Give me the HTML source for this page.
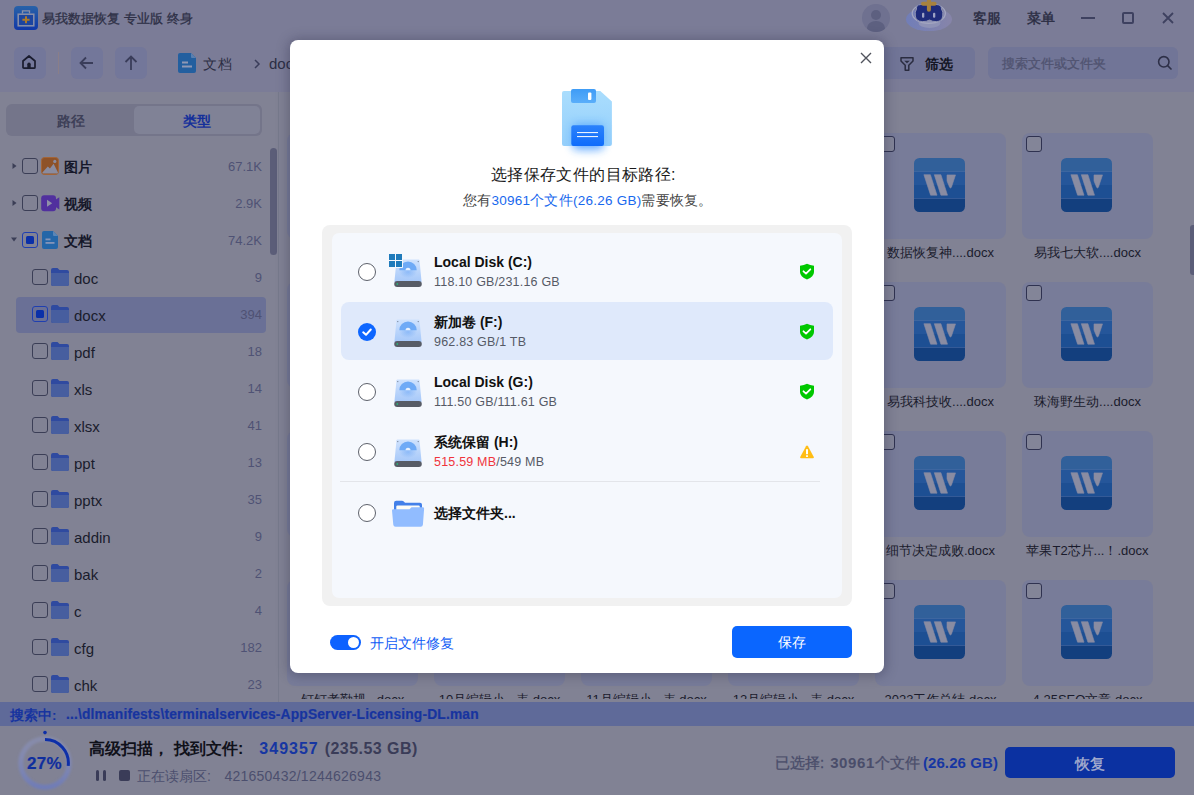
<!DOCTYPE html>
<html><head><meta charset="utf-8">
<style>
*{box-sizing:border-box;margin:0;padding:0}
html,body{width:1194px;height:795px;overflow:hidden;font-family:"Liberation Sans",sans-serif;background:#818294;position:relative}
.a{position:absolute}
.t{position:absolute;white-space:nowrap;line-height:1}
/* header */
#hdr{left:0;top:0;width:1194px;height:92px;background:#7b7c97}
.tbtn{position:absolute;top:47px;width:32px;height:32px;border-radius:6px;background:#73779a}
/* sidebar */
#side{left:0;top:92px;width:279px;height:610px;background:#818294;border-right:1px solid #777a8c}
.cb{position:absolute;width:16px;height:16px;border:1.3px solid #3b3e56;border-radius:3px}
.cbp{border-color:#1f3fb0}
.cbp::after{content:"";position:absolute;left:2.7px;top:2.7px;width:8px;height:8px;background:#0b30a8;border-radius:1.5px}
.tx0{font-size:14px;font-weight:bold;color:#16182a}
.tx1{font-size:15px;color:#1a1c2c}
.cnt{font-size:13px;color:#4f5274;text-align:right;width:60px}
/* cards */
.card{position:absolute;width:131px;height:106px;border-radius:8px;background:#787c99}
.card .cb{left:4px;top:3px;width:16px;height:16px;border-color:#2f3250;background:#838598}
.lbl{position:absolute;width:147px;text-align:center;font-size:13px;color:#1a1b2c;white-space:nowrap;margin-top:1px}
</style></head><body>
<div id="hdr" class="a"></div>
<div id="side" class="a"></div>

<!-- sidebar -->
<div class="a" style="left:6px;top:104px;width:256px;height:32px;border-radius:6px;background:#74758a"></div>
<div class="a" style="left:134px;top:106px;width:126px;height:28px;border-radius:5px;background:#808296"></div>
<div class="t" style="left:57px;top:114px;font-size:14px;color:#3e4058;font-weight:bold">路径</div>
<div class="t" style="left:183px;top:114px;font-size:14px;color:#15309a;font-weight:bold">类型</div>
<div class="a" style="left:270px;top:148px;width:7px;height:107px;border-radius:3.5px;background:#5b5d78"></div>
<div class="a" style="left:16px;top:297px;width:250px;height:36px;border-radius:4px;background:#6a7096"></div>
<svg class="a" style="left:12px;top:162px" width="6" height="8" viewBox="0 0 6 8"><path d="M0.5 1 V7 L4.5 4Z" fill="#3b3e56"/></svg><div class="cb" style="left:22px;top:158px"></div><svg class="a" style="left:41px;top:157px" width="18" height="18" viewBox="0 0 18 18"><rect x="0.5" y="0.5" width="17" height="17" rx="3" fill="#8e5228" stroke="#a36436" stroke-width="1"/><path d="M1.4 15.6 L6.8 9.6 L8.9 11.4 L12.6 6.8 L17 15.6 Q17 16.6 16 16.6 H2.4 Q1.4 16.6 1.4 15.6Z" fill="#8a8ca0"/><circle cx="13.8" cy="4.4" r="1.6" fill="#8a8ca0"/></svg><div class="t tx0" style="left:64px;top:160px">图片</div><div class="t cnt" style="left:202px;top:160px">67.1K</div><svg class="a" style="left:12px;top:199px" width="6" height="8" viewBox="0 0 6 8"><path d="M0.5 1 V7 L4.5 4Z" fill="#3b3e56"/></svg><div class="cb" style="left:22px;top:195px"></div><svg class="a" style="left:41px;top:194px" width="19" height="18" viewBox="0 0 19 18"><rect x="0.2" y="1.3" width="14.8" height="16" rx="3" fill="#51309e"/><path d="M14 6 L18.3 3.2 V15.4 L14 12.6Z" fill="#51309e"/><path d="M6 5.8 L11.2 9.3 L6 12.8Z" fill="#8f90a8"/></svg><div class="t tx0" style="left:64px;top:197px">视频</div><div class="t cnt" style="left:202px;top:197px">2.9K</div><svg class="a" style="left:10px;top:237px" width="8" height="6" viewBox="0 0 8 6"><path d="M1 0.5 H7 L4 4.5Z" fill="#3b3e56"/></svg><div class="cb cbp" style="left:22px;top:232px"></div><svg class="a" style="left:42px;top:231px" width="16" height="18" viewBox="0 0 16 18"><path d="M2 0 H11 L16 5 V16 Q16 18 14 18 H2 Q0 18 0 16 V2 Q0 0 2 0Z" fill="#2466a8"/><path d="M11 0 L16 5 H12 Q11 5 11 4Z" fill="#5a86b8"/><rect x="3.5" y="7.5" width="5" height="1.8" fill="#8494b8"/><rect x="3.5" y="11" width="9" height="1.8" fill="#8494b8"/></svg><div class="t tx0" style="left:64px;top:234px">文档</div><div class="t cnt" style="left:202px;top:234px">74.2K</div><div class="cb" style="left:32px;top:269px"></div><svg class="a" style="left:51px;top:268px" width="18" height="18" viewBox="0 0 18 18"><path d="M0 2 Q0 0 2 0 H6.5 L8.5 2 H16 Q18 2 18 4 V16 Q18 18 16 18 H2 Q0 18 0 16Z" fill="#2f4aa0"/><path d="M0 5 H18 V16 Q18 18 16 18 H2 Q0 18 0 16Z" fill="#475e9f"/></svg><div class="t tx1" style="left:74px;top:271px">doc</div><div class="t cnt" style="left:202px;top:271px">9</div><div class="cb cbp" style="left:32px;top:306px"></div><svg class="a" style="left:51px;top:305px" width="18" height="18" viewBox="0 0 18 18"><path d="M0 2 Q0 0 2 0 H6.5 L8.5 2 H16 Q18 2 18 4 V16 Q18 18 16 18 H2 Q0 18 0 16Z" fill="#2f4aa0"/><path d="M0 5 H18 V16 Q18 18 16 18 H2 Q0 18 0 16Z" fill="#475e9f"/></svg><div class="t tx1" style="left:74px;top:308px">docx</div><div class="t cnt" style="left:202px;top:308px">394</div><div class="cb" style="left:32px;top:343px"></div><svg class="a" style="left:51px;top:342px" width="18" height="18" viewBox="0 0 18 18"><path d="M0 2 Q0 0 2 0 H6.5 L8.5 2 H16 Q18 2 18 4 V16 Q18 18 16 18 H2 Q0 18 0 16Z" fill="#2f4aa0"/><path d="M0 5 H18 V16 Q18 18 16 18 H2 Q0 18 0 16Z" fill="#475e9f"/></svg><div class="t tx1" style="left:74px;top:345px">pdf</div><div class="t cnt" style="left:202px;top:345px">18</div><div class="cb" style="left:32px;top:380px"></div><svg class="a" style="left:51px;top:379px" width="18" height="18" viewBox="0 0 18 18"><path d="M0 2 Q0 0 2 0 H6.5 L8.5 2 H16 Q18 2 18 4 V16 Q18 18 16 18 H2 Q0 18 0 16Z" fill="#2f4aa0"/><path d="M0 5 H18 V16 Q18 18 16 18 H2 Q0 18 0 16Z" fill="#475e9f"/></svg><div class="t tx1" style="left:74px;top:382px">xls</div><div class="t cnt" style="left:202px;top:382px">14</div><div class="cb" style="left:32px;top:417px"></div><svg class="a" style="left:51px;top:416px" width="18" height="18" viewBox="0 0 18 18"><path d="M0 2 Q0 0 2 0 H6.5 L8.5 2 H16 Q18 2 18 4 V16 Q18 18 16 18 H2 Q0 18 0 16Z" fill="#2f4aa0"/><path d="M0 5 H18 V16 Q18 18 16 18 H2 Q0 18 0 16Z" fill="#475e9f"/></svg><div class="t tx1" style="left:74px;top:419px">xlsx</div><div class="t cnt" style="left:202px;top:419px">41</div><div class="cb" style="left:32px;top:454px"></div><svg class="a" style="left:51px;top:453px" width="18" height="18" viewBox="0 0 18 18"><path d="M0 2 Q0 0 2 0 H6.5 L8.5 2 H16 Q18 2 18 4 V16 Q18 18 16 18 H2 Q0 18 0 16Z" fill="#2f4aa0"/><path d="M0 5 H18 V16 Q18 18 16 18 H2 Q0 18 0 16Z" fill="#475e9f"/></svg><div class="t tx1" style="left:74px;top:456px">ppt</div><div class="t cnt" style="left:202px;top:456px">13</div><div class="cb" style="left:32px;top:491px"></div><svg class="a" style="left:51px;top:490px" width="18" height="18" viewBox="0 0 18 18"><path d="M0 2 Q0 0 2 0 H6.5 L8.5 2 H16 Q18 2 18 4 V16 Q18 18 16 18 H2 Q0 18 0 16Z" fill="#2f4aa0"/><path d="M0 5 H18 V16 Q18 18 16 18 H2 Q0 18 0 16Z" fill="#475e9f"/></svg><div class="t tx1" style="left:74px;top:493px">pptx</div><div class="t cnt" style="left:202px;top:493px">35</div><div class="cb" style="left:32px;top:528px"></div><svg class="a" style="left:51px;top:527px" width="18" height="18" viewBox="0 0 18 18"><path d="M0 2 Q0 0 2 0 H6.5 L8.5 2 H16 Q18 2 18 4 V16 Q18 18 16 18 H2 Q0 18 0 16Z" fill="#2f4aa0"/><path d="M0 5 H18 V16 Q18 18 16 18 H2 Q0 18 0 16Z" fill="#475e9f"/></svg><div class="t tx1" style="left:74px;top:530px">addin</div><div class="t cnt" style="left:202px;top:530px">9</div><div class="cb" style="left:32px;top:565px"></div><svg class="a" style="left:51px;top:564px" width="18" height="18" viewBox="0 0 18 18"><path d="M0 2 Q0 0 2 0 H6.5 L8.5 2 H16 Q18 2 18 4 V16 Q18 18 16 18 H2 Q0 18 0 16Z" fill="#2f4aa0"/><path d="M0 5 H18 V16 Q18 18 16 18 H2 Q0 18 0 16Z" fill="#475e9f"/></svg><div class="t tx1" style="left:74px;top:567px">bak</div><div class="t cnt" style="left:202px;top:567px">2</div><div class="cb" style="left:32px;top:602px"></div><svg class="a" style="left:51px;top:601px" width="18" height="18" viewBox="0 0 18 18"><path d="M0 2 Q0 0 2 0 H6.5 L8.5 2 H16 Q18 2 18 4 V16 Q18 18 16 18 H2 Q0 18 0 16Z" fill="#2f4aa0"/><path d="M0 5 H18 V16 Q18 18 16 18 H2 Q0 18 0 16Z" fill="#475e9f"/></svg><div class="t tx1" style="left:74px;top:604px">c</div><div class="t cnt" style="left:202px;top:604px">4</div><div class="cb" style="left:32px;top:639px"></div><svg class="a" style="left:51px;top:638px" width="18" height="18" viewBox="0 0 18 18"><path d="M0 2 Q0 0 2 0 H6.5 L8.5 2 H16 Q18 2 18 4 V16 Q18 18 16 18 H2 Q0 18 0 16Z" fill="#2f4aa0"/><path d="M0 5 H18 V16 Q18 18 16 18 H2 Q0 18 0 16Z" fill="#475e9f"/></svg><div class="t tx1" style="left:74px;top:641px">cfg</div><div class="t cnt" style="left:202px;top:641px">182</div><div class="cb" style="left:32px;top:676px"></div><svg class="a" style="left:51px;top:675px" width="18" height="18" viewBox="0 0 18 18"><path d="M0 2 Q0 0 2 0 H6.5 L8.5 2 H16 Q18 2 18 4 V16 Q18 18 16 18 H2 Q0 18 0 16Z" fill="#2f4aa0"/><path d="M0 5 H18 V16 Q18 18 16 18 H2 Q0 18 0 16Z" fill="#475e9f"/></svg><div class="t tx1" style="left:74px;top:678px">chk</div><div class="t cnt" style="left:202px;top:678px">23</div>
<!-- grid -->
<svg width="0" height="0" style="position:absolute"><defs>
<symbol id="wd" viewBox="0 0 51 54">
 <clipPath id="wclip"><rect width="51" height="54" rx="5.5"/></clipPath>
 <g clip-path="url(#wclip)">
 <rect y="0" width="51" height="13.5" fill="#31609a"/>
 <rect y="13.5" width="51" height="13.5" fill="#25569a"/>
 <rect y="27" width="51" height="13.5" fill="#1d4f93"/>
 <rect y="40.5" width="51" height="13.5" fill="#133f7e"/>
 <rect y="13.3" width="51" height="0.6" fill="#3f6aa4"/>
 <rect y="40.3" width="51" height="0.6" fill="#3a62a0"/>
 </g>
 <g fill="#898ca2" stroke="#898ca2" stroke-width="0.6" stroke-linejoin="round">
 <path d="M9.9 16.7 H16.4 L23 37.2 H16.6Z"/>
 <path d="M20.3 16.7 H26.9 L33.5 37.2 H26.9Z"/>
 <path d="M33 16.9 H41.5 L37.4 29.3 Q36.4 30.6 35.6 29.3 L33 22.9Z"/>
 </g>
</symbol></defs></svg>
<div class="card" style="left:287px;top:133px"><div class="cb"></div></div><svg class="a" style="left:326px;top:158px" width="51" height="54"><use href="#wd"/></svg><div class="card" style="left:434px;top:133px"><div class="cb"></div></div><svg class="a" style="left:473px;top:158px" width="51" height="54"><use href="#wd"/></svg><div class="card" style="left:581px;top:133px"><div class="cb"></div></div><svg class="a" style="left:620px;top:158px" width="51" height="54"><use href="#wd"/></svg><div class="card" style="left:728px;top:133px"><div class="cb"></div></div><svg class="a" style="left:767px;top:158px" width="51" height="54"><use href="#wd"/></svg><div class="card" style="left:875px;top:133px"><div class="cb"></div></div><svg class="a" style="left:914px;top:158px" width="51" height="54"><use href="#wd"/></svg><div class="t lbl" style="left:867px;top:245px">数据恢复神....docx</div><div class="card" style="left:1022px;top:133px"><div class="cb"></div></div><svg class="a" style="left:1061px;top:158px" width="51" height="54"><use href="#wd"/></svg><div class="t lbl" style="left:1014px;top:245px">易我七大软....docx</div><div class="card" style="left:287px;top:282px"><div class="cb"></div></div><svg class="a" style="left:326px;top:307px" width="51" height="54"><use href="#wd"/></svg><div class="card" style="left:434px;top:282px"><div class="cb"></div></div><svg class="a" style="left:473px;top:307px" width="51" height="54"><use href="#wd"/></svg><div class="card" style="left:581px;top:282px"><div class="cb"></div></div><svg class="a" style="left:620px;top:307px" width="51" height="54"><use href="#wd"/></svg><div class="card" style="left:728px;top:282px"><div class="cb"></div></div><svg class="a" style="left:767px;top:307px" width="51" height="54"><use href="#wd"/></svg><div class="card" style="left:875px;top:282px"><div class="cb"></div></div><svg class="a" style="left:914px;top:307px" width="51" height="54"><use href="#wd"/></svg><div class="t lbl" style="left:867px;top:394px">易我科技收....docx</div><div class="card" style="left:1022px;top:282px"><div class="cb"></div></div><svg class="a" style="left:1061px;top:307px" width="51" height="54"><use href="#wd"/></svg><div class="t lbl" style="left:1014px;top:394px">珠海野生动....docx</div><div class="card" style="left:287px;top:431px"><div class="cb"></div></div><svg class="a" style="left:326px;top:456px" width="51" height="54"><use href="#wd"/></svg><div class="card" style="left:434px;top:431px"><div class="cb"></div></div><svg class="a" style="left:473px;top:456px" width="51" height="54"><use href="#wd"/></svg><div class="card" style="left:581px;top:431px"><div class="cb"></div></div><svg class="a" style="left:620px;top:456px" width="51" height="54"><use href="#wd"/></svg><div class="card" style="left:728px;top:431px"><div class="cb"></div></div><svg class="a" style="left:767px;top:456px" width="51" height="54"><use href="#wd"/></svg><div class="card" style="left:875px;top:431px"><div class="cb"></div></div><svg class="a" style="left:914px;top:456px" width="51" height="54"><use href="#wd"/></svg><div class="t lbl" style="left:867px;top:543px">细节决定成败.docx</div><div class="card" style="left:1022px;top:431px"><div class="cb"></div></div><svg class="a" style="left:1061px;top:456px" width="51" height="54"><use href="#wd"/></svg><div class="t lbl" style="left:1014px;top:543px">苹果T2芯片...！.docx</div><div class="card" style="left:287px;top:580px"><div class="cb"></div></div><svg class="a" style="left:326px;top:605px" width="51" height="54"><use href="#wd"/></svg><div class="t lbl" style="left:279px;top:692px">钉钉考勤规...docx</div><div class="card" style="left:434px;top:580px"><div class="cb"></div></div><svg class="a" style="left:473px;top:605px" width="51" height="54"><use href="#wd"/></svg><div class="t lbl" style="left:426px;top:692px">10月编辑小...表.docx</div><div class="card" style="left:581px;top:580px"><div class="cb"></div></div><svg class="a" style="left:620px;top:605px" width="51" height="54"><use href="#wd"/></svg><div class="t lbl" style="left:573px;top:692px">11月编辑小...表.docx</div><div class="card" style="left:728px;top:580px"><div class="cb"></div></div><svg class="a" style="left:767px;top:605px" width="51" height="54"><use href="#wd"/></svg><div class="t lbl" style="left:720px;top:692px">12月编辑小...表.docx</div><div class="card" style="left:875px;top:580px"><div class="cb"></div></div><svg class="a" style="left:914px;top:605px" width="51" height="54"><use href="#wd"/></svg><div class="t lbl" style="left:867px;top:692px">2023工作总结.docx</div><div class="card" style="left:1022px;top:580px"><div class="cb"></div></div><svg class="a" style="left:1061px;top:605px" width="51" height="54"><use href="#wd"/></svg><div class="t lbl" style="left:1014px;top:692px">4.25SEO文章.docx</div><div class="a" style="left:1190px;top:225px;width:6px;height:50px;border-radius:3px;background:#5b5d78"></div><!-- title bar -->
<svg class="a" style="left:14px;top:6px" width="24" height="24" viewBox="0 0 24 24">
 <defs><linearGradient id="gi" x1="0" y1="0" x2="0" y2="1"><stop offset="0" stop-color="#2862a8"/><stop offset="1" stop-color="#1038a8"/></linearGradient></defs>
 <rect x="0" y="0" width="24" height="24" rx="4" fill="url(#gi)"/>
 <path d="M8.5 7.6 V4.8 H15.5 V7.6" fill="none" stroke="#8a90a8" stroke-width="1.3"/>
 <rect x="4.2" y="8.2" width="15.6" height="11.6" fill="#1c45a0" stroke="#8a90a8" stroke-width="1.5"/>
 <path d="M12 10.3 V17.2 M8.4 13.7 H15.6" stroke="#ad7a2a" stroke-width="2"/>
</svg>
<div class="t" style="left:42px;top:12px;font-size:13px;color:#2e3046;-webkit-text-stroke:0.3px #2e3046">易我数据恢复<span style="margin-left:4px">专业版</span><span style="margin-left:4px">终身</span></div>
<div class="a" style="left:862px;top:4px;width:28px;height:28px;border-radius:50%;background:#6f7190;overflow:hidden">
 <div class="a" style="left:9px;top:6px;width:10px;height:10px;border-radius:50%;background:#5d6080"></div>
 <div class="a" style="left:5px;top:17px;width:18px;height:14px;border-radius:50%;background:#5d6080"></div>
</div>
<svg class="a" style="left:904px;top:0" width="50" height="32" viewBox="0 0 50 32">
 <defs><linearGradient id="mb" x1="0" y1="0" x2="1" y2="0"><stop offset="0" stop-color="#6f7ebe"/><stop offset="1" stop-color="#8986ac"/></linearGradient></defs>
 <ellipse cx="25" cy="19.3" rx="23" ry="11.8" fill="url(#mb)" opacity=".85"/>
 <ellipse cx="25.5" cy="23" rx="11" ry="5" fill="#8e92b6"/>
 <ellipse cx="24.8" cy="13.3" rx="16.6" ry="10" fill="none" stroke="#a3a6c0" stroke-width="1.3"/>
 <path d="M12.5 9 Q12 4.8 16.5 4.6 Q20 3.6 24.5 4.4 Q29 3.6 33 4.6 Q37.5 4.8 37.5 9 Q39.5 12 38.8 16 Q38 21.5 32.5 21.6 Q28.5 21.8 25.5 20 Q22.5 21.8 18.5 21.6 Q12 21.5 11.3 16 Q10.6 12 12.5 9Z" fill="#1f2b7a" stroke="#8f93b3" stroke-width="1"/>
 <rect x="18" y="12.8" width="2.3" height="5" rx="1" fill="#9ea3c4"/><rect x="29" y="12.8" width="2.3" height="5" rx="1" fill="#9ea3c4"/>
 <path d="M24.9 0.5 V9.8 M19 3.7 H30.6" stroke="#a8823e" stroke-width="4" stroke-linecap="round"/>
</svg>
<div class="t" style="left:973px;top:11px;font-size:14px;color:#2a2c42;-webkit-text-stroke:0.4px #2a2c42">客服</div>
<div class="t" style="left:1027px;top:11px;font-size:14px;color:#2a2c42;-webkit-text-stroke:0.4px #2a2c42">菜单</div>
<div class="a" style="left:1081px;top:17px;width:14px;height:2px;background:#3e4160"></div>
<div class="a" style="left:1122px;top:12px;width:12px;height:12px;border:2px solid #3e4160;border-radius:2px"></div>
<svg class="a" style="left:1161px;top:11px" width="14" height="14" viewBox="0 0 14 14"><path d="M2 2 L12 12 M12 2 L2 12" stroke="#3e4160" stroke-width="1.8"/></svg>
<!-- toolbar -->
<div class="tbtn" style="left:14px"></div>
<svg class="a" style="left:21px;top:54px" width="16" height="16" viewBox="0 0 16 16"><path d="M2 7 L8 2 L14 7 V13.2 Q14 14.2 13 14.2 H3 Q2 14.2 2 13.2 Z" fill="none" stroke="#1a1c2e" stroke-width="1.7" stroke-linejoin="round"/><path d="M6.3 14.5 V10.2 Q6.3 8.5 8 8.5 Q9.7 8.5 9.7 10.2 V14.5Z" fill="#1a1c2e"/></svg>
<div class="a" style="left:58px;top:52px;width:1px;height:22px;background:#8a7e88"></div>
<div class="tbtn" style="left:71px"></div>
<svg class="a" style="left:78px;top:54px" width="18" height="18" viewBox="0 0 18 18"><path d="M15 9 H2.5 M8 3.5 L2.5 9 L8 14.5" fill="none" stroke="#3a3d5a" stroke-width="1.8"/></svg>
<div class="tbtn" style="left:115px"></div>
<svg class="a" style="left:122px;top:54px" width="18" height="18" viewBox="0 0 18 18"><path d="M9 16 V2.5 M3.5 8 L9 2.5 L14.5 8" fill="none" stroke="#3a3d5a" stroke-width="1.8"/></svg>
<svg class="a" style="left:178px;top:53px" width="18" height="20" viewBox="0 0 18 20"><path d="M2 0 H13 L18 5 V18 Q18 20 16 20 H2 Q0 20 0 18 V2 Q0 0 2 0Z" fill="#235f9f"/><path d="M13 0 L18 5 H14 Q13 5 13 4Z" fill="#5a80b0"/><rect x="4" y="8.5" width="6" height="2" fill="#8f98b4"/><rect x="4" y="12.5" width="10" height="2" fill="#8f98b4"/></svg>
<div class="t" style="left:203px;top:57px;font-size:14px;color:#2c2e44;letter-spacing:0.5px">文档</div>
<svg class="a" style="left:253px;top:59px" width="8" height="10" viewBox="0 0 8 10"><path d="M2 1 L6 5 L2 9" fill="none" stroke="#3a3d5a" stroke-width="1.5"/></svg>
<div class="t" style="left:269px;top:56px;font-size:15px;color:#2c2e44">docx</div>
<div class="a" style="left:870px;top:47px;width:105px;height:32px;border-radius:6px;background:#717597"></div>
<svg class="a" style="left:899px;top:56px" width="16" height="16" viewBox="0 0 16 16"><path d="M2 1.8 H14 V5 L9.8 9.2 V14.2 H6.2 V9.2 L2 5 Z" fill="none" stroke="#2a2c40" stroke-width="1.5" stroke-linejoin="round"/><path d="M5.2 4.8 H10.8 L8 7.2Z" fill="#2a2c40"/></svg>
<div class="t" style="left:925px;top:57px;font-size:14px;color:#141624;font-weight:bold">筛选</div>
<div class="a" style="left:988px;top:47px;width:190px;height:32px;border-radius:6px;background:#717597"></div>
<div class="t" style="left:1002px;top:57px;font-size:13px;color:#505370;-webkit-text-stroke:0.3px #505370">搜索文件或文件夹</div>
<svg class="a" style="left:1157px;top:55px" width="16" height="16" viewBox="0 0 16 16"><circle cx="6.8" cy="6.8" r="5.2" fill="none" stroke="#2e3048" stroke-width="1.6"/><path d="M10.6 10.6 L14.5 14.5" stroke="#2e3048" stroke-width="1.6"/></svg>

<div id="main" class="a" style="left:279px;top:91px;width:915px;height:611px"></div>
<div class="a" style="left:279px;top:699px;width:915px;height:3px;background:#818294"></div><div id="status" class="a" style="left:0;top:702px;width:1194px;height:24px;background:#5f6a99"></div>
<div id="bottom" class="a" style="left:0;top:726px;width:1194px;height:69px;background:#818294"></div>

<!-- status + bottom -->
<div class="t" style="left:10px;top:709px;font-size:13.5px;color:#17349f;font-weight:bold">搜索中:</div>
<div class="t" style="left:66px;top:708px;font-size:13.8px;color:#17349f;font-weight:bold;letter-spacing:0.16px;-webkit-text-stroke:0.2px #17349f">...\dlmanifests\terminalservices-AppServer-Licensing-DL.man</div>
<svg class="a" style="left:14px;top:728px" width="62" height="66" viewBox="0 0 62 66">
 <defs><filter id="rb" x="-0.2" y="-0.2" width="1.4" height="1.4"><feGaussianBlur stdDeviation="1"/></filter><linearGradient id="rg" x1="0" y1="0" x2="0" y2="1"><stop offset="0" stop-color="#8f97c4" stop-opacity=".45"/><stop offset="1" stop-color="#6f7cb8" stop-opacity=".95"/></linearGradient></defs>
 <circle cx="31" cy="35" r="24.2" fill="none" stroke="url(#rg)" stroke-width="5" filter="url(#rb)"/>
 <path d="M31 11.6 A23.4 23.4 0 0 1 54.2 37.9" fill="none" stroke="#0d2fa8" stroke-width="3"/>
 <circle cx="31" cy="4.6" r="1.8" fill="#0d2fa8"/>
</svg>
<div class="t" style="left:27px;top:755px;font-size:17px;color:#0f2e9e;font-weight:bold;letter-spacing:0.3px;-webkit-text-stroke:0.2px #0f2e9e">27%</div>
<div class="t" style="left:89px;top:741px;font-size:16px;color:#10111a;font-weight:bold">高级扫描<span style="margin-right:5px">，</span>找到文件:<span style="color:#1636a2;margin-left:16px;letter-spacing:1px">349357</span><span style="color:#3a3c58;margin-left:6px;letter-spacing:0.45px">(235.53 GB)</span></div>
<div class="a" style="left:96px;top:770px;width:3px;height:11px;border-radius:1.5px;background:#3a3c58"></div>
<div class="a" style="left:103px;top:770px;width:3px;height:11px;border-radius:1.5px;background:#3a3c58"></div>
<div class="a" style="left:119px;top:770px;width:11px;height:11px;border-radius:2px;background:#3a3c58"></div>
<div class="t" style="left:137px;top:769px;font-size:14px;color:#4c4f6e">正在读扇区:<span style="margin-left:13.5px;letter-spacing:0.25px">421650432/1244626943</span></div>
<div class="t" style="left:775px;top:755px;font-size:15px;color:#4a4d6a;-webkit-text-stroke:0.3px #4a4d6a">已选择:<span style="margin-left:6px;font-weight:bold;letter-spacing:0.6px;-webkit-text-stroke:0">30961</span><span>个文件</span><span style="color:#1636a2;margin-left:3px;font-weight:bold;letter-spacing:0.1px;-webkit-text-stroke:0">(26.26 GB)</span></div>
<div class="a" style="left:1005px;top:747px;width:170px;height:31px;border-radius:5px;background:#0b31a1"></div>
<div class="t" style="left:1005px;top:756px;width:170px;text-align:center;font-size:15px;color:#a9b0cf;-webkit-text-stroke:0.3px #a9b0cf">恢复</div>
<div id="modal" class="a" style="left:290px;top:40px;width:594px;height:633px;background:#fff;border-radius:8px;box-shadow:0 1px 12px 2px rgba(40,40,70,.35)"></div>

<div class="a" style="left:290px;top:40px;width:594px;height:633px">
<svg class="a" style="left:570px;top:12px" width="12" height="12" viewBox="0 0 12 12"><path d="M1 1 L11 11 M11 1 L1 11" stroke="#50535c" stroke-width="1.4"/></svg>
<!-- floppy -->
<svg class="a" style="left:252px;top:30px" width="90" height="95" viewBox="-10 -10 90 95">
 <defs>
  <filter id="blur" x="-1" y="-1" width="3" height="3"><feGaussianBlur stdDeviation="5"/></filter>
  <linearGradient id="tab" x1="0" y1="0" x2="0" y2="1"><stop offset="0" stop-color="#3f9cf6"/><stop offset="1" stop-color="#5aaefa"/></linearGradient>
  <linearGradient id="lab" x1="0" y1="0" x2="0" y2="1"><stop offset="0" stop-color="#2b82fb"/><stop offset="1" stop-color="#0f6cfb"/></linearGradient>
  <linearGradient id="bod" x1="0" y1="0" x2="0" y2="1"><stop offset="0" stop-color="#a2dafd"/><stop offset="1" stop-color="#8ccbfb"/></linearGradient>
 </defs>
 <rect x="21" y="44" width="30" height="26" rx="4" fill="#2a8cff" opacity=".55" filter="url(#blur)"/>
 <path d="M12 10.9 Q10 10.9 10 12.9 V64 Q10 66 12 66 H57.9 Q59.9 66 59.9 64 V21.6 L48.3 10.9 Z" fill="url(#bod)" opacity=".92"/>
 <rect x="21" y="44" width="30" height="22" rx="3" fill="#2a8cff" opacity=".5" filter="url(#blur)"/>
 <rect x="19" y="8.9" width="25" height="14.1" rx="2" fill="url(#tab)"/>
 <rect x="36" y="12.5" width="3.4" height="7.5" rx="1" fill="#fff"/>
 <rect x="19.3" y="45.3" width="32.7" height="20.7" rx="2.2" fill="url(#lab)"/>
 <rect x="25" y="52" width="21" height="1.1" fill="#e8f3ff"/>
 <rect x="25" y="56" width="21" height="1.1" fill="#e8f3ff"/>
</svg>
<div class="t" style="left:201px;top:127px;font-size:16px;color:#1a1a1a;letter-spacing:0.36px">选择保存文件的目标路径:</div>
<div class="t" style="left:173px;top:154px;font-size:13.5px;color:#444;letter-spacing:0.24px">您有<span style="color:#1768ee">30961个文件(26.26 GB)</span>需要恢复。</div>
<div class="a" style="left:32px;top:185px;width:530px;height:381px;border-radius:8px;background:#f1f1f1"></div>
<div class="a" style="left:42px;top:193px;width:510px;height:365px;border-radius:7px;background:#f5f8fd"></div>
<div class="a" style="left:51px;top:262px;width:492px;height:58px;border-radius:8px;background:#dfe9fb"></div>
<div class="a" style="left:50px;top:441px;width:480px;height:1px;background:#e3e5ea"></div>
</div>
<div class="a" style="left:358px;top:263px;width:18px;height:18px;border-radius:50%;border:1.2px solid #5d616b;background:#fff"></div><svg class="a" style="left:393px;top:259px" width="30" height="29" viewBox="0 0 30 29">
 <defs><linearGradient id="dg0" x1="0" y1="0" x2="0" y2="1"><stop offset="0" stop-color="#cfe2fd"/><stop offset="1" stop-color="#a6c8f9"/></linearGradient>
 <radialGradient id="dr0" cx="0.5" cy="0.5" r="0.5"><stop offset="0" stop-color="#6aa6f6" stop-opacity=".55"/><stop offset="1" stop-color="#6aa6f6" stop-opacity="0"/></radialGradient></defs>
 <path d="M3.5 1.3 Q3.6 0.6 4.4 0.6 H25.6 Q26.4 0.6 26.5 1.3 L28.6 23 H1.4 Z" fill="url(#dg0)"/>
 <ellipse cx="15" cy="13" rx="9" ry="6" fill="url(#dr0)"/>
 <path d="M6.3 11.2 A8.7 8.7 0 0 1 23.7 11.2 Z" fill="#6eaaf6"/>
 <path d="M12.5 11.2 A2.5 2.5 0 0 1 17.5 11.2 Z" fill="#e6f0fe"/>
 <circle cx="4.8" cy="2.6" r="0.6" fill="#6a7488"/><circle cx="25.2" cy="2.6" r="0.6" fill="#6a7488"/>
 <rect x="1.2" y="22" width="27.6" height="6" rx="3" fill="#575c66"/>
 <circle cx="4.3" cy="25" r="0.9" fill="#2bb07a"/>
</svg><svg class="a" style="left:388px;top:253px" width="15" height="15" viewBox="0 0 15 15"><rect width="15" height="15" fill="#f5f8fd" rx="1"/><rect x="1" y="1" width="6" height="6" fill="#1f7bbb"/><rect x="8" y="1" width="6" height="6" fill="#1f7bbb"/><rect x="1" y="8" width="6" height="6" fill="#1f7bbb"/><rect x="8" y="8" width="6" height="6" fill="#1f7bbb"/></svg><div class="t" style="left:434px;top:255px;font-size:14px;font-weight:bold;color:#111">Local Disk (C:)</div><div class="t" style="left:434px;top:276px;font-size:12.5px;color:#555a66;letter-spacing:0.2px">118.10 GB/231.16 GB</div><svg class="a" style="left:799px;top:263px" width="16" height="17" viewBox="0 0 16 17"><path d="M8 0.8 Q11 2.2 15 2.8 V9 Q15 13.5 8 16.5 Q1 13.5 1 9 V2.8 Q5 2.2 8 0.8Z" fill="#00c800"/><path d="M4.5 8.3 L7 10.6 L11.3 6.3" fill="none" stroke="#fff" stroke-width="1.8" stroke-linecap="round" stroke-linejoin="round"/></svg><svg class="a" style="left:358px;top:323px" width="18" height="18" viewBox="0 0 18 18"><circle cx="9" cy="9" r="9" fill="#0d66ff"/><path d="M5.2 9.3 L8 11.8 L12.8 6.5" fill="none" stroke="#fff" stroke-width="2" stroke-linecap="round" stroke-linejoin="round"/></svg><svg class="a" style="left:393px;top:319px" width="30" height="29" viewBox="0 0 30 29">
 <defs><linearGradient id="dg1" x1="0" y1="0" x2="0" y2="1"><stop offset="0" stop-color="#cfe2fd"/><stop offset="1" stop-color="#a6c8f9"/></linearGradient>
 <radialGradient id="dr1" cx="0.5" cy="0.5" r="0.5"><stop offset="0" stop-color="#6aa6f6" stop-opacity=".55"/><stop offset="1" stop-color="#6aa6f6" stop-opacity="0"/></radialGradient></defs>
 <path d="M3.5 1.3 Q3.6 0.6 4.4 0.6 H25.6 Q26.4 0.6 26.5 1.3 L28.6 23 H1.4 Z" fill="url(#dg1)"/>
 <ellipse cx="15" cy="13" rx="9" ry="6" fill="url(#dr1)"/>
 <path d="M6.3 11.2 A8.7 8.7 0 0 1 23.7 11.2 Z" fill="#6eaaf6"/>
 <path d="M12.5 11.2 A2.5 2.5 0 0 1 17.5 11.2 Z" fill="#e6f0fe"/>
 <circle cx="4.8" cy="2.6" r="0.6" fill="#6a7488"/><circle cx="25.2" cy="2.6" r="0.6" fill="#6a7488"/>
 <rect x="1.2" y="22" width="27.6" height="6" rx="3" fill="#575c66"/>
 <circle cx="4.3" cy="25" r="0.9" fill="#2bb07a"/>
</svg><div class="t" style="left:434px;top:315px;font-size:14px;font-weight:bold;color:#111">新加卷 (F:)</div><div class="t" style="left:434px;top:336px;font-size:12.5px;color:#555a66;letter-spacing:0.2px">962.83 GB/1 TB</div><svg class="a" style="left:799px;top:323px" width="16" height="17" viewBox="0 0 16 17"><path d="M8 0.8 Q11 2.2 15 2.8 V9 Q15 13.5 8 16.5 Q1 13.5 1 9 V2.8 Q5 2.2 8 0.8Z" fill="#00c800"/><path d="M4.5 8.3 L7 10.6 L11.3 6.3" fill="none" stroke="#fff" stroke-width="1.8" stroke-linecap="round" stroke-linejoin="round"/></svg><div class="a" style="left:358px;top:383px;width:18px;height:18px;border-radius:50%;border:1.2px solid #5d616b;background:#fff"></div><svg class="a" style="left:393px;top:379px" width="30" height="29" viewBox="0 0 30 29">
 <defs><linearGradient id="dg2" x1="0" y1="0" x2="0" y2="1"><stop offset="0" stop-color="#cfe2fd"/><stop offset="1" stop-color="#a6c8f9"/></linearGradient>
 <radialGradient id="dr2" cx="0.5" cy="0.5" r="0.5"><stop offset="0" stop-color="#6aa6f6" stop-opacity=".55"/><stop offset="1" stop-color="#6aa6f6" stop-opacity="0"/></radialGradient></defs>
 <path d="M3.5 1.3 Q3.6 0.6 4.4 0.6 H25.6 Q26.4 0.6 26.5 1.3 L28.6 23 H1.4 Z" fill="url(#dg2)"/>
 <ellipse cx="15" cy="13" rx="9" ry="6" fill="url(#dr2)"/>
 <path d="M6.3 11.2 A8.7 8.7 0 0 1 23.7 11.2 Z" fill="#6eaaf6"/>
 <path d="M12.5 11.2 A2.5 2.5 0 0 1 17.5 11.2 Z" fill="#e6f0fe"/>
 <circle cx="4.8" cy="2.6" r="0.6" fill="#6a7488"/><circle cx="25.2" cy="2.6" r="0.6" fill="#6a7488"/>
 <rect x="1.2" y="22" width="27.6" height="6" rx="3" fill="#575c66"/>
 <circle cx="4.3" cy="25" r="0.9" fill="#2bb07a"/>
</svg><div class="t" style="left:434px;top:375px;font-size:14px;font-weight:bold;color:#111">Local Disk (G:)</div><div class="t" style="left:434px;top:396px;font-size:12.5px;color:#555a66;letter-spacing:0.2px">111.50 GB/111.61 GB</div><svg class="a" style="left:799px;top:383px" width="16" height="17" viewBox="0 0 16 17"><path d="M8 0.8 Q11 2.2 15 2.8 V9 Q15 13.5 8 16.5 Q1 13.5 1 9 V2.8 Q5 2.2 8 0.8Z" fill="#00c800"/><path d="M4.5 8.3 L7 10.6 L11.3 6.3" fill="none" stroke="#fff" stroke-width="1.8" stroke-linecap="round" stroke-linejoin="round"/></svg><div class="a" style="left:358px;top:443px;width:18px;height:18px;border-radius:50%;border:1.2px solid #5d616b;background:#fff"></div><svg class="a" style="left:393px;top:439px" width="30" height="29" viewBox="0 0 30 29">
 <defs><linearGradient id="dg3" x1="0" y1="0" x2="0" y2="1"><stop offset="0" stop-color="#cfe2fd"/><stop offset="1" stop-color="#a6c8f9"/></linearGradient>
 <radialGradient id="dr3" cx="0.5" cy="0.5" r="0.5"><stop offset="0" stop-color="#6aa6f6" stop-opacity=".55"/><stop offset="1" stop-color="#6aa6f6" stop-opacity="0"/></radialGradient></defs>
 <path d="M3.5 1.3 Q3.6 0.6 4.4 0.6 H25.6 Q26.4 0.6 26.5 1.3 L28.6 23 H1.4 Z" fill="url(#dg3)"/>
 <ellipse cx="15" cy="13" rx="9" ry="6" fill="url(#dr3)"/>
 <path d="M6.3 11.2 A8.7 8.7 0 0 1 23.7 11.2 Z" fill="#6eaaf6"/>
 <path d="M12.5 11.2 A2.5 2.5 0 0 1 17.5 11.2 Z" fill="#e6f0fe"/>
 <circle cx="4.8" cy="2.6" r="0.6" fill="#6a7488"/><circle cx="25.2" cy="2.6" r="0.6" fill="#6a7488"/>
 <rect x="1.2" y="22" width="27.6" height="6" rx="3" fill="#575c66"/>
 <circle cx="4.3" cy="25" r="0.9" fill="#2bb07a"/>
</svg><div class="t" style="left:434px;top:435px;font-size:14px;font-weight:bold;color:#111">系统保留 (H:)</div><div class="t" style="left:434px;top:456px;font-size:12.5px;color:#555a66;letter-spacing:0.2px"><span style="color:#f0343c">515.59 MB</span>/549 MB</div><svg class="a" style="left:799px;top:444px" width="16" height="16" viewBox="0 0 16 16"><path d="M8 1.5 Q8.6 1.5 9 2.2 L14.8 13 Q15.2 14.3 13.8 14.3 H2.2 Q0.8 14.3 1.2 13 L7 2.2 Q7.4 1.5 8 1.5Z" fill="#ffbd14"/><rect x="7" y="5.2" width="2" height="5" fill="#fff"/><rect x="7" y="11.3" width="2" height="1.6" fill="#fff"/></svg><div class="a" style="left:358px;top:504px;width:18px;height:18px;border-radius:50%;border:1.2px solid #5d616b;background:#fff"></div><svg class="a" style="left:391px;top:500px" width="34" height="28" viewBox="0 0 34 28">
 <path d="M3 3 Q3 0.7 5.3 0.7 H11 Q12 0.7 12.8 1.5 L14 2.7 H29 Q31 2.7 31 4.7 V14 H3Z" fill="#4380e9"/>
 <rect x="5.3" y="5.5" width="23.5" height="10" rx="1.2" fill="#fdfcf6"/>
 <path d="M1 10.5 Q1 9.2 2.4 9.2 H18.5 L20.5 7.3 H31.8 Q33.2 7.3 33.1 8.8 L31.9 24.7 Q31.7 26.8 29.6 26.8 H4.6 Q2.5 26.8 2.3 24.7Z" fill="#91bcff"/>
</svg><div class="t" style="left:434px;top:506px;font-size:14px;font-weight:bold;color:#111">选择文件夹...</div><div class="a" style="left:330px;top:635px;width:31px;height:15px;border-radius:7.5px;background:#0d62ff"></div><div class="a" style="left:348.3px;top:637px;width:11px;height:11px;border-radius:50%;background:#fff"></div><div class="t" style="left:370px;top:636px;font-size:14px;color:#0f5cf5">开启文件修复</div><div class="a" style="left:732px;top:626px;width:120px;height:32px;border-radius:5px;background:#0a66ff"></div><div class="t" style="left:732px;top:635px;width:120px;text-align:center;font-size:14px;color:#fff">保存</div></body></html>
